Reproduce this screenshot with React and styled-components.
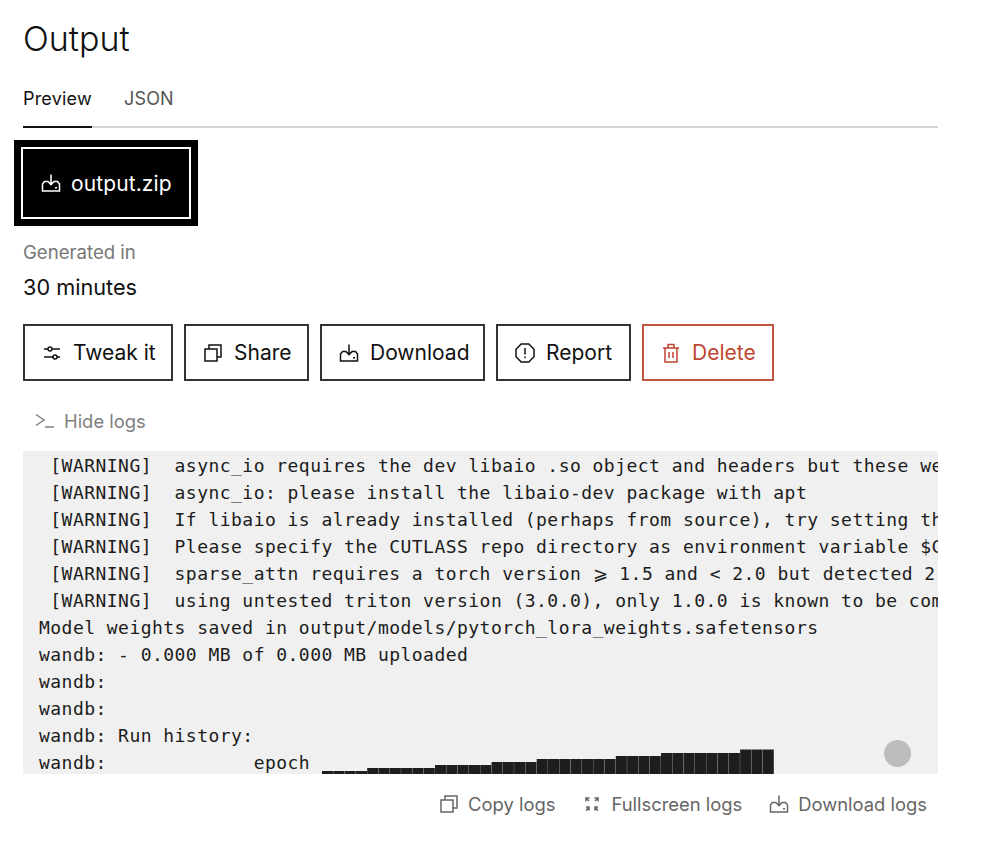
import styled, { createGlobalStyle } from 'styled-components';

const GlobalStyle = createGlobalStyle`
  body {
    margin: 0;
    background: #fff;
    font-family: Inter, "Liberation Sans", sans-serif;
    color: #111;
  }
`;

const TrayIcon = () => (
  <Svg viewBox="0 0 20 20">
    <path d="M10 1.500v10M6.400 8l3.600 3.600L13.600 8M6.500 8.500h-3l-2 2.500v7h17v-7l-2-2.500h-3" />
    <path d="M14 14.800h2" />
  </Svg>
);

const SlidersIcon = () => (
  <Svg viewBox="0 0 20 20">
    <path d="M2 6h4M10 6h8M2 14h9M15 14h3" />
    <circle cx="8" cy="6" r="2" />
    <circle cx="13" cy="14" r="2" />
  </Svg>
);

const CopyIcon = () => (
  <Svg viewBox="0 0 20 20">
    <rect x="2" y="6" width="12" height="12" />
    <path d="M6 6V2h12v12h-4" />
  </Svg>
);

const AlertIcon = () => (
  <Svg viewBox="0 0 20 20">
    <path d="M6.200 1h7.600l5.200 5.200v7.600L13.800 19H6.200L1 13.800V6.200z" />
    <path d="M10 5v6.500M10 13.500v1.800" />
  </Svg>
);

const TrashIcon = () => (
  <Svg viewBox="0 0 20 20">
    <path d="M2 5h16M4 5v14h12V5M7 5V1.500h6V5M8 9v6M12 9v6" />
  </Svg>
);

const TerminalIcon = () => (
  <Svg viewBox="0 0 20 20">
    <path d="M1 3.500l8 5.500-8 5.500M10 16h9" />
  </Svg>
);

const ExpandIcon = () => (
  <Svg viewBox="0 0 20 20">
    <path d="M4 7.500V4h3.500M12.500 4H16v3.500M4 4l3 3M16 4l-3 3M4 13h3v3.500M16 13h-3v3.500M4 16.500L7 13M16 16.500L13 13" />
  </Svg>
);

// height in px of every block of the epoch sparkline, one per character
const epochBars = [
  3, 3, 3, 3, 6, 6, 6, 6, 6, 6, 9, 9, 9, 9, 9, 12, 12, 12, 12,
  15, 15, 15, 15, 15, 15, 15, 18, 18, 18, 18, 21, 21, 21, 21, 21, 21, 21, 24.5, 24.5, 24.5,
];

const EpochChart = () => (
  <Chart viewBox="0 0 452 26" width="452" height="26">
    {epochBars.map((h, i) => (
      <rect key={i} x={i * 11.3} y={26 - h} width="11.1" height={h} fill="#1e1e1e" />
    ))}
  </Chart>
);

const logLines = [
  ' [WARNING]  async_io requires the dev libaio .so object and headers but these were not found.',
  ' [WARNING]  async_io: please install the libaio-dev package with apt',
  ' [WARNING]  If libaio is already installed (perhaps from source), try setting the LD_LIBRARY_PATH',
  ' [WARNING]  Please specify the CUTLASS repo directory as environment variable $CUTLASS_HOME',
  ' [WARNING]  sparse_attn requires a torch version ⩾ 1.5 and < 2.0 but detected 2.1.2',
  ' [WARNING]  using untested triton version (3.0.0), only 1.0.0 is known to be compatible',
  'Model weights saved in output/models/pytorch_lora_weights.safetensors',
  'wandb: - 0.000 MB of 0.000 MB uploaded',
  'wandb:',
  'wandb:',
  'wandb: Run history:',
];

const App = () => (
  <Page>
    <GlobalStyle />
    <Title>Output</Title>
    <Tabs>
      <Tab $active>Preview</Tab>
      <Tab>JSON</Tab>
    </Tabs>
    <FileButton>
      <TrayIcon />
      output.zip
    </FileButton>
    <MetaLabel>Generated in</MetaLabel>
    <MetaValue>30 minutes</MetaValue>
    <Actions>
      <ActionButton $width={150}><SlidersIcon />Tweak it</ActionButton>
      <ActionButton $width={125}><CopyIcon />Share</ActionButton>
      <ActionButton $width={165}><TrayIcon />Download</ActionButton>
      <ActionButton $width={135}><AlertIcon />Report</ActionButton>
      <ActionButton $width={132} $danger><TrashIcon />Delete</ActionButton>
    </Actions>
    <LogsToggle><TerminalIcon />Hide logs</LogsToggle>
    <LogPanel>
      <LogText>
        {logLines.map((line, i) => (
          <LogLine key={i}>{line}</LogLine>
        ))}
        <LogLine>
          {'wandb:             epoch '}
          <EpochChart />
        </LogLine>
      </LogText>
      <ScrollDot />
    </LogPanel>
    <LogFooter>
      <FooterLink><CopyIcon />Copy logs</FooterLink>
      <FooterLink><ExpandIcon />Fullscreen logs</FooterLink>
      <FooterLink><TrayIcon />Download logs</FooterLink>
    </LogFooter>
  </Page>
);

export default App;


const Page = styled.div`
  width: 915px;
  box-sizing: border-box;
  margin-left: 23px;
  padding-top: 18px;
`;

const Svg = styled.svg`
  width: 20px;
  height: 20px;
  flex: none;
  fill: none;
  stroke: currentColor;
  stroke-width: 1.5;
`;

const Title = styled.h1`
  margin: 0;
  font-size: 34px;
  line-height: 42px;
  font-weight: 350;
`;

const Tabs = styled.div`
  display: flex;
  gap: 32px;
  height: 51px;
  margin-top: 17px;
  box-sizing: border-box;
  border-bottom: 2px solid #d6d6d6;
`;

const Tab = styled.div`
  height: 51px;
  box-sizing: border-box;
  padding-top: 10px;
  font-size: 18px;
  line-height: 24px;
  letter-spacing: 0.2px;
  color: ${(p) => (p.$active ? '#111' : '#555')};
  border-bottom: ${(p) => (p.$active ? '2px solid #111' : 'none')};
`;

const FileButton = styled.button`
  display: flex;
  align-items: center;
  gap: 10px;
  box-sizing: border-box;
  width: 170px;
  height: 72px;
  margin: 19px 0 0 -2px;
  padding: 0 0 0 18px;
  background: #000;
  color: #fff;
  border: 2px solid #fff;
  outline: 7px solid #000;
  font-family: inherit;
  font-size: 21px;
  letter-spacing: 0.1px;
`;

const MetaLabel = styled.div`
  margin-top: 21px;
  font-size: 18.6px;
  line-height: 24px;
  color: #777;
`;

const MetaValue = styled.div`
  margin-top: 9px;
  font-size: 21.7px;
  line-height: 28px;
`;

const Actions = styled.div`
  display: flex;
  gap: 11px;
  margin-top: 23px;
`;

const ActionButton = styled.button`
  display: flex;
  align-items: center;
  gap: 11px;
  box-sizing: border-box;
  width: ${(p) => p.$width}px;
  height: 57px;
  padding: 0 0 0 17px;
  background: #fff;
  border: 2px solid ${(p) => (p.$danger ? '#c25540' : '#333')};
  color: ${(p) => (p.$danger ? '#c0452f' : '#111')};
  font-family: inherit;
  font-size: 21px;
`;

const LogsToggle = styled.div`
  display: flex;
  align-items: center;
  gap: 9px;
  height: 26px;
  margin: 27px 0 0 12px;
  font-size: 18.4px;
  color: #808080;
`;

const LogPanel = styled.div`
  position: relative;
  height: 323px;
  margin-top: 17px;
  background: #f0f0f0;
  overflow: hidden;
`;

const LogText = styled.div`
  padding: 1px 0 0 16px;
  font-family: "DejaVu Sans Mono", "Liberation Mono", monospace;
  font-size: 18px;
  letter-spacing: 0.46px;
  color: #1c1c1c;
`;

const LogLine = styled.div`
  position: relative;
  height: 27px;
  line-height: 27px;
  white-space: pre;
`;

const Chart = styled.svg`
  position: absolute;
  top: -1px;
  left: 283px;
`;

const ScrollDot = styled.div`
  position: absolute;
  right: 27px;
  bottom: 7px;
  width: 27px;
  height: 27px;
  border-radius: 50%;
  background: #bdbdbd;
`;

const LogFooter = styled.div`
  display: flex;
  justify-content: flex-end;
  gap: 27px;
  margin: 17px 11px 0 0;
`;

const FooterLink = styled.div`
  display: flex;
  align-items: center;
  gap: 9px;
  height: 26px;
  font-size: 18.4px;
  color: #666;
`;
